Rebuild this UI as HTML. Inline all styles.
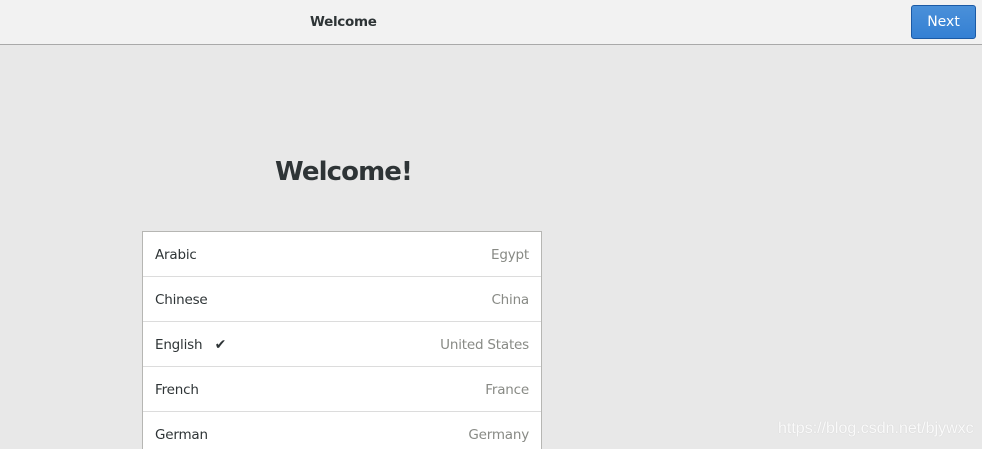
<!DOCTYPE html>
<html><head><style>
html,body{margin:0;width:982px;height:449px;overflow:hidden}
body{background:#e8e8e8;font-family:"DejaVu Sans","Liberation Sans",sans-serif;position:relative}
.hdr{position:absolute;left:0;top:0;width:982px;height:44px;background:#f2f2f2;border-bottom:1px solid #a9a9a9}
.title{position:absolute;left:310px;top:14px;font-size:13.5px;font-weight:bold;color:#2e3436;letter-spacing:-0.3px}
.btn{position:absolute;left:911px;top:5px;width:63px;height:32px;border:1px solid #1b5aa5;border-radius:3px;background:linear-gradient(#4a90d9,#3580d3);color:#fff;font-size:14px;text-align:center;line-height:33px}
h1{position:absolute;left:275px;top:157px;margin:0;font-size:26px;font-weight:bold;color:#2e3436;letter-spacing:-0.9px}
.list{position:absolute;left:142px;top:231px;width:398px;height:230px;background:#fff;border:1px solid #b6b6b3}
.row{height:44px;border-bottom:1px solid #dcdcdc;position:relative;font-size:13.5px;letter-spacing:-0.2px}
.row .l{position:absolute;left:12px;top:15px;color:#2e3436}
.row .r{position:absolute;right:12px;top:15px;color:#888a85}
.wm{position:absolute;left:778px;top:420px;font-size:16px;color:#fafafa;font-family:"Liberation Sans",sans-serif;text-shadow:0 0 1px #c8c8c8}
</style></head><body>
<div class="hdr"><div class="title">Welcome</div><div class="btn">Next</div></div>
<h1>Welcome!</h1>
<div class="list">
<div class="row"><span class="l">Arabic</span><span class="r">Egypt</span></div>
<div class="row"><span class="l">Chinese</span><span class="r">China</span></div>
<div class="row"><span class="l">English &nbsp;&nbsp;<span style="font-size:14px">✔</span></span><span class="r">United States</span></div>
<div class="row"><span class="l">French</span><span class="r">France</span></div>
<div class="row"><span class="l">German</span><span class="r">Germany</span></div>
</div>
<div class="wm">https://blog.csdn.net/bjywxc</div>
</body></html>
